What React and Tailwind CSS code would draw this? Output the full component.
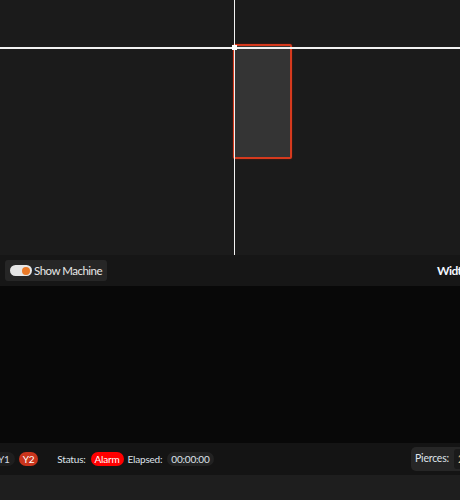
export default function App() {
  const font = { fontFamily: 'Lato,"Noto Sans",sans-serif' };
  return (
    <div className="w-[460px] h-[500px] overflow-hidden flex flex-col bg-[#1b1b1b] text-[#e6e6e6]" style={font}>
      {/* canvas */}
      <div className="relative h-[255px] shrink-0 bg-[#1b1b1b] overflow-hidden">
        <div className="absolute left-[233px] top-[44px] w-[59px] h-[115px] bg-[#343434] border-2 border-[#d63a1e] rounded-[2px] shadow-[0_0_2px_#6b2010]" />
        <div className="absolute left-[234px] top-0 w-px h-full bg-[#f2f2f2]" />
        <div className="absolute left-0 top-[47px] w-full h-[2px] bg-[#f2f2f2]" />
        <div className="absolute left-[232px] top-[45px] w-[5px] h-[5px] bg-white" />
      </div>
      {/* toolbar */}
      <div className="h-[31px] shrink-0 bg-[#161616] flex items-center justify-between pl-[5px] overflow-hidden">
        <button className="h-[21px] flex items-center gap-[2px] pl-[5px] pr-[7px] rounded-[3px] bg-[#262626] text-[12px] tracking-[-0.5px] text-[#e8e8e8]">
          <span className="relative w-[22px] h-[11px] rounded-full bg-[#e6e6e6]">
            <span className="absolute right-[2px] top-[1.5px] w-[8px] h-[8px] rounded-full bg-[#ea7a28]" />
          </span>
          <span className="w-[66px] text-left whitespace-nowrap text-[11.5px]">Show Machine</span>
        </button>
        <span className="text-[12px] font-bold tracking-[-0.6px] text-[#f4f8ff] mr-[-20px] w-[43px] shrink-0">Width</span>
      </div>
      {/* black area */}
      <div className="h-[157px] shrink-0 bg-[#080808]" />
      {/* status bar */}
      <div className="h-[32px] shrink-0 bg-[#141414] flex items-center overflow-hidden text-[10px] tracking-[-0.2px]">
        <div className="flex items-center ml-[-7px]">
          <span className="px-[5px] h-[14px] leading-[14px] rounded-full bg-[#1e1e1e] text-[#cfd6e0]">Y1</span>
          <span className="ml-[4px] px-[4px] h-[14px] leading-[14px] rounded-full bg-[#c9341c] text-white">Y2</span>
          <span className="ml-[19px] text-[#dfe3ea]">Status:</span>
          <span className="ml-[5px] px-[4px] h-[14px] leading-[14px] rounded-full bg-[#ff0000] text-white">Alarm</span>
          <span className="ml-[4px] text-[#dfe3ea]">Elapsed:</span>
          <span className="ml-[5px] px-[4px] h-[14px] leading-[14px] rounded-full bg-[#222] text-[#dfe3ea]">00:00:00</span>
        </div>
        <div className="ml-auto flex items-center h-[24px] rounded-l-[5px] bg-[#262626] pl-[4px] mr-[-20px] w-[69px] shrink-0 text-[10.5px]">
          <span className="text-[#dfe3ea]">Pierces:</span>
          <span className="ml-[5px] h-[20px] leading-[20px] px-[4px] rounded-[3px] bg-[#1a1a1a] text-[#f0c080]">24</span>
        </div>
      </div>
      <div className="flex-1 bg-[#1e1e1e]" />
    </div>
  );
}
